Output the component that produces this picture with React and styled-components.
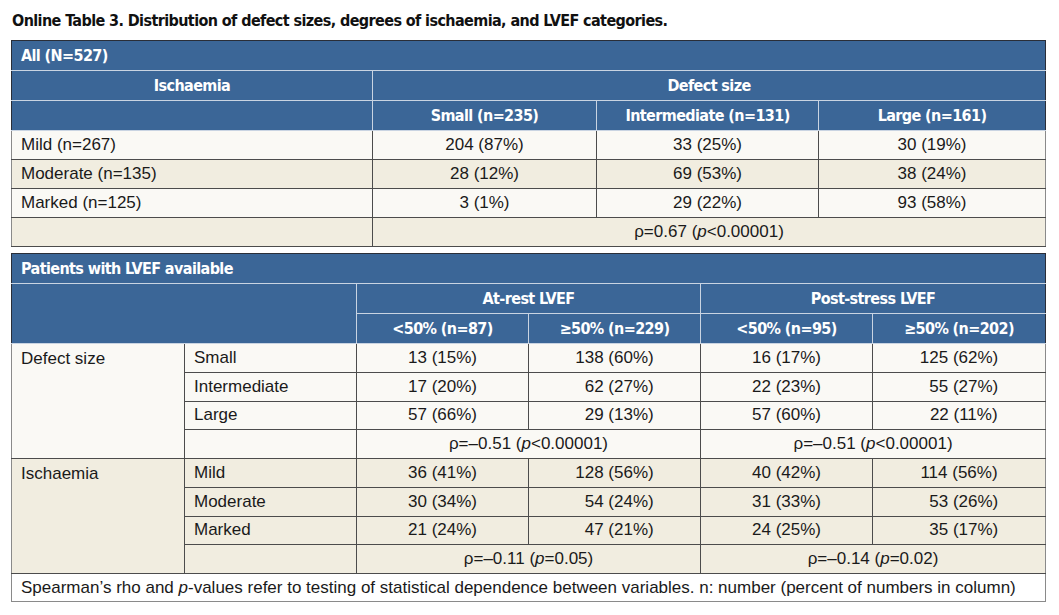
import React from "react";
import styled, { createGlobalStyle } from "styled-components";

const GlobalStyle = createGlobalStyle`
  html, body {
    margin: 0;
    padding: 0;
    background: #ffffff;
  }
  body {
    font-family: "Liberation Sans", Arial, sans-serif;
    color: #1a1a1a;
  }
`;

const condensed = `
  font-family: "Liberation Sans Narrow", "DejaVu Sans Condensed", "Liberation Sans", sans-serif;
  font-stretch: condensed;
  font-weight: bold;
  letter-spacing: -0.6px;
`;

const Page = styled.div`
  width: 1059px;
  height: 615px;
  padding: 11px 14px 0 11px;
  box-sizing: border-box;
`;

const Caption = styled.h1`
  ${condensed}
  font-size: 16px;
  line-height: 20px;
  margin: 0 0 9px 1px;
  color: #111;
`;

const Table = styled.table`
  width: 1034px;
  border-collapse: collapse;
  table-layout: fixed;
  margin-bottom: ${(p) => p.gap || 0}px;
  border: 1px solid #7a7a7a;
`;

const HeadRow = styled.tr`
  background: #3b6697;
`;

const Th = styled.th`
  ${condensed}
  color: #ffffff;
  font-size: 16px;
  height: 29px;
  padding: 0 9px;
  text-align: ${(p) => (p.left ? "left" : "center")};
  border: 1px solid #c9d4e2;
  border-top-color: ${(p) => (p.top ? "#2a2e38" : "#c9d4e2")};
  border-left-color: ${(p) => (p.edge ? "#2a2e38" : "#c9d4e2")};
  border-right-color: ${(p) => (p.redge ? "#2a2e38" : "#c9d4e2")};
  white-space: nowrap;
`;

const Row = styled.tr`
  background: ${(p) => (p.shade ? "#f1ede0" : "#faf9f5")};
`;

const Td = styled.td`
  font-size: 17px;
  height: ${(p) => (p.tight ? "27.75px" : "28px")};
  padding: 0 9px;
  text-align: ${(p) => (p.left ? "left" : "center")};
  vertical-align: ${(p) => (p.top ? "top" : "middle")};
  padding-top: ${(p) => (p.top ? "5px" : "0")};
  border: 1px solid #4c4c4c;
  border-left-color: ${(p) => (p.edge ? "#8a8a8a" : "#4c4c4c")};
  border-right-color: ${(p) => (p.redge ? "#8a8a8a" : "#4c4c4c")};
  white-space: nowrap;
`;

const Note = styled.td`
  font-size: 17px;
  height: 27px;
  padding: 0 9px;
  background: #ffffff;
  border: 1px solid #8a8a8a;
  white-space: nowrap;
`;

const Rho = ({ r, p }) => (
  <>
    ρ={r} (<i>p</i>
    {p})
  </>
);

const fs = "\u2007";

const firstRows = [
  ["Mild (n=267)", "204 (87%)", "33 (25%)", "30 (19%)"],
  ["Moderate (n=135)", "28 (12%)", "69 (53%)", "38 (24%)"],
  ["Marked (n=125)", "3 (1%)", "29 (22%)", "93 (58%)"],
];

const groups = [
  {
    label: "Defect size",
    shade: false,
    rows: [
      ["Small", "13 (15%)", "138 (60%)", "16 (17%)", "125 (62%)"],
      ["Intermediate", "17 (20%)", fs + "62 (27%)", "22 (23%)", fs + "55 (27%)"],
      ["Large", "57 (66%)", fs + "29 (13%)", "57 (60%)", fs + "22 (11%)"],
    ],
    rho: [
      ["–0.51", "<0.00001"],
      ["–0.51", "<0.00001"],
    ],
  },
  {
    label: "Ischaemia",
    shade: true,
    rows: [
      ["Mild", "36 (41%)", "128 (56%)", "40 (42%)", "114 (56%)"],
      ["Moderate", "30 (34%)", fs + "54 (24%)", "31 (33%)", fs + "53 (26%)"],
      ["Marked", "21 (24%)", fs + "47 (21%)", "24 (25%)", fs + "35 (17%)"],
    ],
    rho: [
      ["–0.11", "=0.05"],
      ["–0.14", "=0.02"],
    ],
  },
];

const App = () => {
  return (
    <Page>
      <GlobalStyle />
      <Caption>
        Online Table 3. Distribution of defect sizes, degrees of ischaemia, and LVEF categories.
      </Caption>

      <Table gap={6}>
        <colgroup>
          <col style={{ width: 361 }} />
          <col style={{ width: 224 }} />
          <col style={{ width: 222 }} />
          <col style={{ width: 227 }} />
        </colgroup>
        <thead>
          <HeadRow>
            <Th colSpan={4} left top edge redge>
              All (N=527)
            </Th>
          </HeadRow>
          <HeadRow>
            <Th edge>Ischaemia</Th>
            <Th colSpan={3} redge>
              Defect size
            </Th>
          </HeadRow>
          <HeadRow>
            <Th edge />
            <Th>Small (n=235)</Th>
            <Th>Intermediate (n=131)</Th>
            <Th redge>Large (n=161)</Th>
          </HeadRow>
        </thead>
        <tbody>
          {firstRows.map((r, i) => (
            <Row key={r[0]} shade={i % 2 === 1}>
              <Td left edge>
                {r[0]}
              </Td>
              <Td>{r[1]}</Td>
              <Td>{r[2]}</Td>
              <Td redge>{r[3]}</Td>
            </Row>
          ))}
          <Row shade>
            <Td edge />
            <Td colSpan={3} redge>
              <Rho r="0.67" p="<0.00001" />
            </Td>
          </Row>
        </tbody>
      </Table>

      <Table>
        <colgroup>
          <col style={{ width: 173 }} />
          <col style={{ width: 172 }} />
          <col style={{ width: 172 }} />
          <col style={{ width: 172 }} />
          <col style={{ width: 172 }} />
          <col style={{ width: 173 }} />
        </colgroup>
        <thead>
          <HeadRow>
            <Th colSpan={6} left top edge redge>
              Patients with LVEF available
            </Th>
          </HeadRow>
          <HeadRow>
            <Th colSpan={2} rowSpan={2} edge />
            <Th colSpan={2}>At-rest LVEF</Th>
            <Th colSpan={2} redge>
              Post-stress LVEF
            </Th>
          </HeadRow>
          <HeadRow>
            <Th>&lt;50% (n=87)</Th>
            <Th>≥50% (n=229)</Th>
            <Th>&lt;50% (n=95)</Th>
            <Th redge>≥50% (n=202)</Th>
          </HeadRow>
        </thead>
        <tbody>
          {groups.map((g) => (
            <React.Fragment key={g.label}>
              {g.rows.map((r, i) => (
                <Row key={r[0]} shade={g.shade}>
                  {i === 0 && (
                    <Td rowSpan={4} left top edge tight>
                      {g.label}
                    </Td>
                  )}
                  <Td left tight>{r[0]}</Td>
                  <Td tight>{r[1]}</Td>
                  <Td tight>{r[2]}</Td>
                  <Td tight>{r[3]}</Td>
                  <Td redge tight>{r[4]}</Td>
                </Row>
              ))}
              <Row shade={g.shade}>
                <Td tight />
                <Td colSpan={2} tight>
                  <Rho r={g.rho[0][0]} p={g.rho[0][1]} />
                </Td>
                <Td colSpan={2} redge tight>
                  <Rho r={g.rho[1][0]} p={g.rho[1][1]} />
                </Td>
              </Row>
            </React.Fragment>
          ))}
          <tr>
            <Note colSpan={6}>
              Spearman’s rho and <i>p</i>-values refer to testing of statistical dependence between
              variables. n: number (percent of numbers in column)
            </Note>
          </tr>
        </tbody>
      </Table>
    </Page>
  );
};

export default App;
